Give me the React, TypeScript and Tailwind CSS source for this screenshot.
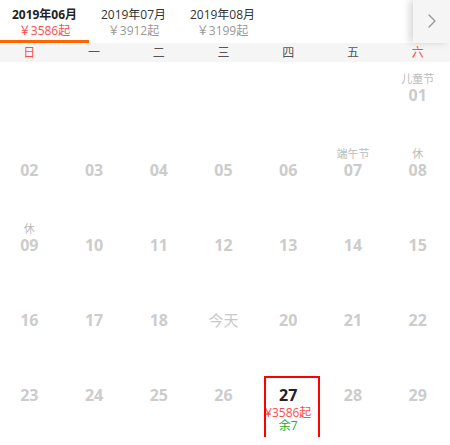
import { ChevronRight } from "lucide-react";

type Day = {
  n?: string;
  label?: string;
  today?: boolean;
  price?: string;
  left?: string;
  selected?: boolean;
};

const tabs = [
  { title: "2019年06月", price: "￥3586起", active: true },
  { title: "2019年07月", price: "￥3912起" },
  { title: "2019年08月", price: "￥3199起" },
];

const week = ["日", "一", "二", "三", "四", "五", "六"];

const days: Day[] = [
  {}, {}, {}, {}, {}, {},
  { n: "01", label: "儿童节" },
  { n: "02" }, { n: "03" }, { n: "04" }, { n: "05" }, { n: "06" },
  { n: "07", label: "端午节" },
  { n: "08", label: "休" },
  { n: "09", label: "休" },
  { n: "10" }, { n: "11" }, { n: "12" }, { n: "13" }, { n: "14" }, { n: "15" },
  { n: "16" }, { n: "17" }, { n: "18" }, { n: "今天", today: true }, { n: "20" }, { n: "21" }, { n: "22" },
  { n: "23" }, { n: "24" }, { n: "25" }, { n: "26" },
  { n: "27", price: "¥3586起", left: "余7", selected: true },
  { n: "28" }, { n: "29" },
];

const font = { fontFamily: '"Open Sans", "Noto Sans CJK SC", sans-serif' };

export default function App() {
  return (
    <div className="w-[450px] bg-white text-[12px] overflow-hidden" style={font}>
      {/* month tabs */}
      <div className="flex h-[43px] bg-white">
        <div className="flex flex-1">
          {tabs.map((t) => (
            <div key={t.title} className="relative w-[89px] flex flex-col items-center pt-[8px]">
              <div className={`leading-[14px] ${t.active ? "font-bold text-[#222]" : "text-[#333]"}`}>{t.title}</div>
              <div className={`leading-[16px] mt-[1px] ${t.active ? "text-[#ff4a4a]" : "text-[#999]"}`}>{t.price}</div>
              {t.active && <div className="absolute left-0 right-0 bottom-0 h-[3px] bg-[#ff6600]" />}
            </div>
          ))}
        </div>
        <div className="w-[37px] bg-[#f5f5f5] shadow-[-4px_0_7px_rgba(0,0,0,0.14)] flex items-start justify-center pt-[9px]">
          <ChevronRight className="w-[24px] h-[24px] text-[#999]" strokeWidth={1.4} />
        </div>
      </div>

      {/* week header */}
      <div className="bg-[#f5f5f5] h-[19px]">
        <div className="grid grid-cols-7 w-[453px] -ml-[3px] h-full">
          {week.map((w, i) => (
            <div
              key={w}
              className={`flex items-center justify-center leading-none ${i === 0 || i === 6 ? "text-[#ff4a4a]" : "text-[#555]"}`}
            >
              {w}
            </div>
          ))}
        </div>
      </div>

      {/* days */}
      <div className="grid grid-cols-7 auto-rows-[75px] w-[453px] -ml-[3px]">
        {days.map((d, i) => (
          <div key={i} className="relative flex flex-col items-center pt-[10px]">
            <div className="h-[13px] leading-[13px] text-[11px] text-[#bbb]">{d.label}</div>
            <div
              className={`h-[21px] leading-[20px] ${
                d.today
                  ? "text-[15px] text-[#c8c8c8]"
                  : d.selected
                  ? "text-[16px] font-bold text-[#222]"
                  : "text-[16px] font-bold text-[#cccccc]"
              }`}
            >
              {d.n}
            </div>
            {d.price && <div className="h-[13px] leading-[13px] text-[#ff4a4a]">{d.price}</div>}
            {d.left && <div className="h-[13px] leading-[13px] text-[#1faa1f]">{d.left}</div>}
            {d.selected && (
              <div className="absolute left-[8px] top-[14px] w-[56px] h-[68px] border-2 border-[#ff0000] pointer-events-none" />
            )}
          </div>
        ))}
      </div>
    </div>
  );
}
